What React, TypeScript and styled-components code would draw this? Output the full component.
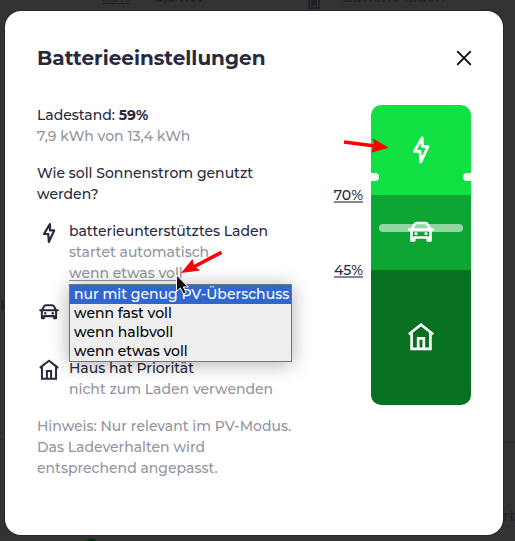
import React from "react";
import styled, { createGlobalStyle } from "styled-components";

const GlobalStyle = createGlobalStyle`
  * { box-sizing: border-box; }
  body { margin: 0; background: #333; overflow: hidden; }
`;

const ink = "#28293e";
const gray = "#93949e";

const Page = styled.div`
  position: relative;
  width: 515px;
  height: 541px;
  padding: 11px 12px 6px 5px;
  overflow: hidden;
  background: #333;
  color: ${ink};
  font: 500 14px/21px Montserrat, Inter, sans-serif;
`;

const Dimmed = styled.span<{ $x: number; $y: number; $bold?: boolean; $track?: number }>`
  position: absolute;
  left: ${(p) => p.$x}px;
  top: ${(p) => p.$y}px;
  color: #20212a;
  white-space: nowrap;
  font-weight: ${(p) => (p.$bold ? 700 : 500)};
  letter-spacing: ${(p) => p.$track ?? 0}px;
`;

const DimmedLink = styled(Dimmed)`
  text-decoration: underline;
  text-underline-offset: 1px;
`;

const Rule = styled.div<{ $x: number; $y: number }>`
  position: absolute;
  left: ${(p) => p.$x}px;
  width: 12px;
  top: ${(p) => p.$y}px;
  height: 1px;
  background: #292929;
`;

const BackdropArt = styled.svg`
  position: absolute;
  inset: 0;
`;

const Modal = styled.section`
  position: relative;
  width: 498px;
  height: 524px;
  padding: 32px;
  border-radius: 16px;
  background: #fff;
  box-shadow: 0 0 0 1px #272727;
`;

const Header = styled.header`
  display: flex;
  justify-content: space-between;
  align-items: center;
  height: 30px;
  margin-right: -1px;
`;

const Title = styled.h1`
  margin: 0;
  font-size: 20px;
  line-height: 30px;
  font-weight: 700;
`;

const CloseButton = styled.button`
  display: flex;
  margin: 0;
  padding: 0;
  border: 0;
  background: none;
`;

const Body = styled.div`
  display: flex;
  justify-content: space-between;
  margin-top: 32px;
`;

const Settings = styled.div`
  display: flex;
  flex-direction: column;
  gap: 16px;
  width: 262px;
`;

const Line = styled.div<{ $muted?: boolean }>`
  height: 21px;
  color: ${(p) => (p.$muted ? gray : ink)};
  white-space: nowrap;
`;

const Selected = styled.u`
  text-underline-offset: 2px;
  text-decoration-thickness: 1px;
`;

const Mode = styled.div<{ $lines: number }>`
  display: grid;
  grid-template-columns: 24px 1fr;
  column-gap: 8px;
  height: ${(p) => p.$lines * 21}px;
`;

const ModeIcon = styled.div`
  display: flex;
  height: 24px;
`;

const Chart = styled.div`
  display: flex;
  gap: 8px;
  height: 300px;
`;

const Limits = styled.div`
  display: flex;
  flex-direction: column;
  align-items: flex-end;
  gap: 54px;
  padding-top: 80px;
`;

const Limit = styled.a`
  height: 21px;
  text-decoration: underline;
  text-decoration-color: #85869a;
  text-decoration-thickness: 2px;
  text-underline-offset: 1px;
`;

const Battery = styled.div`
  position: relative;
  width: 100px;
  height: 300px;
  overflow: hidden;
  border-radius: 10px;
`;

const Zone = styled.div<{ $h: number; $color: string }>`
  display: flex;
  align-items: center;
  justify-content: center;
  height: ${(p) => p.$h}px;
  padding-bottom: ${(p) => p.$h % 2}px;
  background: ${(p) => p.$color};
  color: #fff;

  svg {
    position: relative;
    z-index: 1;
  }
`;

const Notch = styled.i<{ $side: "left" | "right" }>`
  position: absolute;
  top: 68px;
  ${(p) => p.$side}: -4px;
  width: 12px;
  height: 8px;
  border-radius: 4px;
  background: #fff;
`;

const Level = styled.i`
  position: absolute;
  top: 119px;
  left: 8px;
  right: 8px;
  height: 8px;
  border-radius: 4px;
  background: rgba(255, 255, 255, 0.55);
`;

const Menu = styled.ul`
  position: absolute;
  left: 64px;
  top: 273px;
  width: 223px;
  height: 78px;
  margin: 0;
  padding: 0;
  list-style: none;
  border: 1px solid #747474;
  background: #eee;
  color: #000;
  box-shadow: 0 2px 18px rgba(0, 0, 0, 0.32);
`;

const Option = styled.li<{ $active?: boolean }>`
  height: 19px;
  padding-left: 4px;
  line-height: 19px;
  white-space: nowrap;
  background: ${(p) => (p.$active ? "#3067ce" : "transparent")};
  color: ${(p) => (p.$active ? "#fff" : "#000")};
`;

const Annotations = styled.svg`
  position: absolute;
  inset: 0;
  pointer-events: none;
`;

type IconProps = { size: number };

const Bolt = ({ size }: IconProps) => (
  <svg width={size} height={size} viewBox="0 0 32 32" fill="none" stroke="currentColor" strokeWidth="2.9" strokeLinejoin="round">
    <path d="M17.2 4 9.3 17.300h5.700L15.800 28 23 12.500h-5.700Z" />
  </svg>
);

const Car = ({ size }: IconProps) => (
  <svg width={size} height={size} viewBox="0 0 32 32" fill="none" stroke="currentColor" strokeWidth="2.700" strokeLinejoin="round" strokeLinecap="round">
    <path d="M4.200 13.700h23.600M6.700 13.700l2.600-5q.8-1.700 2.600-1.700h8.200q1.800 0 2.600 1.700l2.600 5M6.500 14v10.400h2.700v-2.900h13.600v2.900h2.700V14" />
    <circle cx="11" cy="17.600" r="1.600" fill="currentColor" stroke="none" />
    <circle cx="21" cy="17.600" r="1.600" fill="currentColor" stroke="none" />
  </svg>
);

const House = ({ size }: IconProps) => (
  <svg width={size} height={size} viewBox="0 0 32 32" fill="none" stroke="currentColor" strokeWidth="2.7">
    <path d="M3.800 13.200 16 3.700l12.200 9.500M6.600 11.800v16h18.800v-16M13.200 27.800V17.300h5.600v10.500" />
  </svg>
);

const Cross = () => (
  <svg width="16" height="16" viewBox="0 0 16 16" stroke="#000" strokeWidth="1.7" strokeLinecap="round">
    <path d="m1.700 1.700 12.600 12.600M14.300 1.700 1.700 14.300" />
  </svg>
);

export default function App() {
  return (
    <Page>
      <GlobalStyle />
      <DimmedLink $x={102} $y={-13}>59%</DimmedLink>
      <Dimmed $x={155} $y={-13} $bold>5,3 kW</Dimmed>
      <Dimmed $x={342} $y={-13} $track={0.2}>Batterie laden</Dimmed>
      <Dimmed $x={0} $y={295} $bold>F</Dimmed>
      <Dimmed $x={495} $y={506}>art</Dimmed>
      <Rule $x={0} $y={439} />
      <Rule $x={503} $y={442} />
      <BackdropArt width="515" height="541">
        <path d="M309 -4v12h10v-12" fill="none" stroke="#202126" strokeWidth="2" />
        <path d="M311 -1h6v7h-6z" fill="#202126" />
        <circle cx="91" cy="544" r="6" fill="#032e0c" />
      </BackdropArt>
      <Modal>
        <Header>
          <Title>Batterieeinstellungen</Title>
          <CloseButton aria-label="Schließen"><Cross /></CloseButton>
        </Header>
        <Body>
          <Settings>
            <div>
              <Line>Ladestand: <b>59%</b></Line>
              <Line $muted>7,9 kWh von 13,4 kWh</Line>
            </div>
            <div>
              <Line>Wie soll Sonnenstrom genutzt</Line>
              <Line>werden?</Line>
            </div>
            <Mode $lines={3}>
              <ModeIcon><Bolt size={24} /></ModeIcon>
              <div>
                <Line>batterieunterstütztes Laden</Line>
                <Line $muted>startet automatisch</Line>
                <Line $muted><Selected>wenn etwas voll</Selected></Line>
              </div>
            </Mode>
            <Mode $lines={2}>
              <ModeIcon><Car size={24} /></ModeIcon>
            </Mode>
            <Mode $lines={2}>
              <ModeIcon><House size={24} /></ModeIcon>
              <div>
                <Line>Haus hat Priorität</Line>
                <Line $muted>nicht zum Laden verwenden</Line>
              </div>
            </Mode>
            <div>
              <Line $muted>Hinweis: Nur relevant im PV-Modus.</Line>
              <Line $muted>Das Ladeverhalten wird</Line>
              <Line $muted>entsprechend angepasst.</Line>
            </div>
          </Settings>
          <Chart>
            <Limits>
              <Limit>70%</Limit>
              <Limit>45%</Limit>
            </Limits>
            <Battery>
              <Zone $h={90} $color="#10e041"><Bolt size={32} /></Zone>
              <Zone $h={75} $color="#0ea633"><Car size={32} /></Zone>
              <Zone $h={135} $color="#077121"><House size={32} /></Zone>
              <Notch $side="left" />
              <Notch $side="right" />
              <Level />
            </Battery>
          </Chart>
        </Body>
        <Menu>
          <Option $active>nur mit genug PV-Überschuss</Option>
          <Option>wenn fast voll</Option>
          <Option>wenn halbvoll</Option>
          <Option>wenn etwas voll</Option>
        </Menu>
      </Modal>
      <Annotations width="515" height="541">
        <path d="m176.500 275 0 16.500 3.800-3.500 3.200 6 2.800-1.500-3-5.500h5Z" fill="#111" stroke="#fff" strokeWidth="1" />
        <g fill="#f00" stroke="#f00" strokeLinecap="butt">
          <path d="m344 142 31 4M221.500 252.300l-29 15.200" strokeWidth="3.600" fill="none" />
          <path d="m388.800 147.700-17.800 5 3-6.700-1-7.500ZM181 273l11.500-14 1.700 7 6 4.500Z" stroke="none" />
        </g>
      </Annotations>
    </Page>
  );
}
